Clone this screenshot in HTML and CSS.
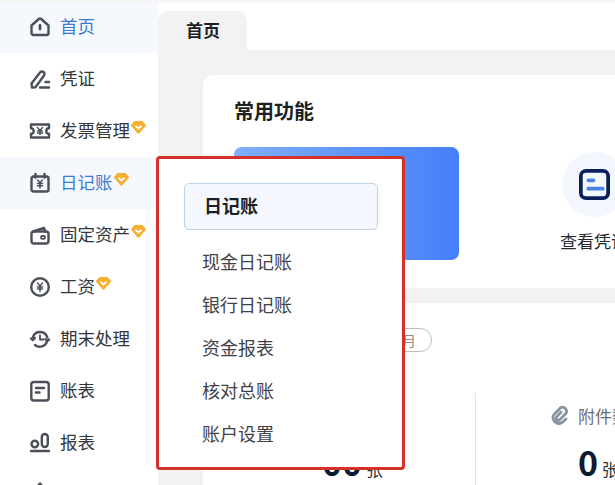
FILE: index.html
```html
<!DOCTYPE html>
<html lang="zh-CN">

<head>
  <meta charset="UTF-8">
  <meta name="viewport" content="width=device-width, initial-scale=1.0">
  <title>首页</title>
  <link rel="stylesheet" href="styles.css">
</head>

<body>
  <div class="page-wrapper">
    <nav class="sidebar">
      <a class="nav-item active">
        <svg class="nav-icon" viewBox="0 0 20 20"><path d="M1.500 8.500 8.800 2a1.800 1.800 0 0 1 2.400 0l7.300 6.500V16a2 2 0 0 1-2 2h-13a2 2 0 0 1-2-2z" /><path class="thick" d="M10 8.500v3.500" /></svg>
        <span>首页</span>
      </a>
      <a class="nav-item">
        <svg class="nav-icon" viewBox="0 0 20 20"><path d="M2 18.500 1.500 14.500 10 3.500a2.500 2.500 0 0 1 4 3L5.500 18.300z" /><path d="M15.500 13h3.500M10 18.500h9" /></svg>
        <span>凭证</span>
      </a>
      <a class="nav-item">
        <svg class="nav-icon" viewBox="0 0 20 20"><path d="M1 3.500h18v3.800a2.700 2.700 0 0 0 0 5.400v3.800H1v-3.800a2.700 2.700 0 0 0 0-5.400z" /><path class="thin" d="M7.500 6.500 10 9.500 12.500 6.500M10 9.500V13.500M7.500 10h5M7.500 12h5" /></svg>
        <span>发票管理</span>
        <svg class="vip" viewBox="0 0 15 13"><path class="vip-gem" d="M4 1h7l3 3.300-6.500 7.500L1 4.300z" /><path class="vip-tick" d="M4.500 4.800 7.500 7.500 10.500 4.800" /></svg>
      </a>
      <a class="nav-item active">
        <svg class="nav-icon" viewBox="0 0 20 20"><rect x="1.500" y="3.500" width="17" height="15" rx="2" /><path d="M5.500 1v3.500M14.500 1v3.500" /><path class="thin" d="M7.500 7 10 9.800 12.500 7M10 9.800V15M7.500 10.500h5M7.500 12.700h5" /></svg>
        <span>日记账</span>
        <svg class="vip" viewBox="0 0 15 13"><path class="vip-gem" d="M4 1h7l3 3.300-6.500 7.500L1 4.300z" /><path class="vip-tick" d="M4.500 4.800 7.500 7.500 10.500 4.800" /></svg>
      </a>
      <a class="nav-item">
        <svg class="nav-icon" viewBox="0 0 20 20"><path d="M3 6.500 14 3l1.500 3.500" /><rect x="1.500" y="6.500" width="17" height="12" rx="2.500" /><rect class="mid" x="11" y="11" width="4" height="2.800" rx="1.400" /></svg>
        <span>固定资产</span>
        <svg class="vip" viewBox="0 0 15 13"><path class="vip-gem" d="M4 1h7l3 3.300-6.500 7.500L1 4.300z" /><path class="vip-tick" d="M4.500 4.800 7.500 7.500 10.500 4.800" /></svg>
      </a>
      <a class="nav-item">
        <svg class="nav-icon" viewBox="0 0 20 20"><circle cx="10" cy="10" r="8.800" /><path class="thin" d="M7.500 6 10 9 12.500 6M10 9v5.500M7.500 10h5M7.500 12h5" /></svg>
        <span>工资</span>
        <svg class="vip" viewBox="0 0 15 13"><path class="vip-gem" d="M4 1h7l3 3.300-6.500 7.500L1 4.300z" /><path class="vip-tick" d="M4.500 4.800 7.500 7.500 10.500 4.800" /></svg>
      </a>
      <a class="nav-item">
        <svg class="nav-icon" viewBox="0 0 20 20"><path d="M3 8A7.500 7.500 0 0 1 17.300 8.500" /><path d="M17 12.500A7.500 7.500 0 0 1 5 16" /><path d="M1 9.500l2 1.500 1.800-2M19 10.500l-1.800 1.500-1.700-1.800" /><path class="mid" d="M10 6.500V10.500H13.500" /></svg>
        <span>期末处理</span>
      </a>
      <a class="nav-item">
        <svg class="nav-icon" viewBox="0 0 20 20"><rect x="1.300" y="1" width="17.400" height="18.500" rx="2.500" /><path d="M6 7h8M6 11.500h3.500" /></svg>
        <span>账表</span>
      </a>
      <a class="nav-item">
        <svg class="nav-icon bars" viewBox="0 0 20 20"><circle cx="4.800" cy="11" r="3.300" /><rect x="11.800" y="1" width="6" height="13" rx="3" /><path d="M1 18h18" /></svg>
        <span>报表</span>
      </a>
      <a class="nav-item">
        <svg class="nav-icon" viewBox="0 0 20 20"><path d="M7.500 1.500 10 -1.500 12.500 1.500" /></svg>
      </a>
    </nav>

    <main class="main">
      <div class="tabs">
        <div class="tab">首页</div>
      </div>
      <div class="content">
        <section class="card common">
          <h2>常用功能</h2>
          <div class="shortcuts">
            <div class="banner"></div>
            <div class="shortcut">
              <div class="shortcut-circle">
                <svg viewBox="0 0 30 30" class="shortcut-icon">
                  <rect x="1.800" y="1.800" width="26.400" height="26.400" rx="5" />
                  <path d="M9 11h5M9 19h14" />
                </svg>
              </div>
              <span>查看凭证</span>
            </div>
          </div>
        </section>

        <section class="card summary">
          <div class="period">
            <span class="pill">本月</span>
          </div>
          <div class="stats">
            <div class="stat stat-voucher">
              <div class="stat-label">凭证数</div>
              <div class="stat-value"><b>00</b> 张</div>
            </div>
            <div class="stat stat-attach">
              <div class="stat-label">
                <svg viewBox="0 0 20 20" class="clip"><path d="M11 7 6.500 12a2.200 2.200 0 0 0 3 3L15.800 8.500a4 4 0 0 0-5.600-5.500L4 9.500a5.800 5.800 0 0 0 8 8L16 14" /></svg>
                <span>附件数</span>
              </div>
              <div class="stat-value"><b>0</b> 张</div>
            </div>
          </div>
        </section>
      </div>
    </main>

    <div class="popup">
      <div class="popup-title">日记账</div>
      <ul class="popup-list">
        <li>现金日记账</li>
        <li>银行日记账</li>
        <li>资金报表</li>
        <li>核对总账</li>
        <li>账户设置</li>
      </ul>
    </div>
  </div>
</body>

</html>
```

FILE: styles.css
```css
* {
  margin: 0;
  padding: 0;
  box-sizing: border-box;
  font-family: "Noto Sans CJK SC", "Noto Sans", sans-serif;
}

html,
body {
  height: 100%;
  width: 100%;
  overflow: hidden;
  background: #fff;
}

.page-wrapper {
  position: relative;
  display: flex;
  height: 485px;
  width: 615px;
  overflow: hidden;
  border-top: 3px solid #f6f6f6;
}

/* left menu */
.sidebar {
  width: 158px;
  flex-shrink: 0;
  margin-top: -2px;
  background: #fff;
}

.nav-item {
  display: flex;
  height: 52px;
  padding-left: 30px;
  align-items: center;
  font-size: 17.5px;
  color: #33363b;
}

.nav-item span {
  margin-bottom: 3px;
}

.nav-item.active {
  background: #f5f9fe;
  color: #3d7bd2;
}

.nav-icon {
  width: 20px;
  height: 20px;
  margin-right: 10px;
  flex-shrink: 0;
  overflow: visible;
  fill: none;
  stroke: #4b4f57;
  stroke-width: 2.400;
  stroke-linecap: round;
  stroke-linejoin: round;
}

.nav-icon .thin {
  stroke-width: 1.400;
}

.nav-icon .mid {
  stroke-width: 1.800;
}

.nav-icon .thick {
  stroke-width: 2.800;
}

.vip {
  width: 15px;
  height: 13px;
  margin-left: 1px;
  margin-bottom: 8px;
  flex-shrink: 0;
}

.vip-gem {
  fill: #f8b030;
  stroke: #f8b030;
  stroke-width: 2;
  stroke-linejoin: round;
}

.vip-tick {
  fill: none;
  stroke: #fff;
  stroke-width: 1.800;
}

/* main area */
.main {
  flex: 1;
  min-width: 0;
}

.tabs {
  height: 47px;
  padding-top: 8px;
}

.tab {
  display: flex;
  width: 89px;
  height: 39px;
  padding: 0 0 2px 28px;
  align-items: center;
  font-size: 17px;
  font-weight: 700;
  color: #1c1f24;
  background: #f2f2f2;
  border-radius: 11px 11px 0 0;
}

.content {
  height: 435px;
  padding: 25px 0 0 45px;
  background: #f2f2f2;
}

.card {
  width: 412px;
  background: #fff;
}

.common {
  height: 213px;
  padding: 24px 0 0 31px;
  border-radius: 10px 0 0 0;
}

.common h2 {
  font-size: 20px;
  font-weight: 700;
  line-height: 24px;
  color: #1c1f24;
}

.shortcuts {
  display: flex;
  margin-top: 24px;
}

.banner {
  width: 225px;
  height: 113px;
  flex-shrink: 0;
  background: linear-gradient(90deg, #7fb0f8, #457ffb);
  border-radius: 8px;
}

.shortcut {
  display: flex;
  flex-direction: column;
  align-items: center;
  flex-shrink: 0;
  margin-left: 101px;
  font-size: 17px;
  line-height: 24px;
  color: #26292e;
  white-space: nowrap;
}

.shortcut-circle {
  display: flex;
  width: 65px;
  height: 65px;
  margin-top: 5px;
  margin-bottom: 12px;
  align-items: center;
  justify-content: center;
  background: #f3f7fd;
  border-radius: 50%;
}

.shortcut-icon {
  width: 31px;
  height: 31px;
  fill: none;
  stroke: #0b1f5c;
  stroke-width: 3.600;
}

.shortcut-icon path {
  stroke: #4a85e6;
  stroke-linecap: round;
}

.summary {
  height: 182px;
  margin-top: 15px;
  padding-top: 25px;
}

.period {
  display: flex;
  height: 24px;
  width: 229px;
  justify-content: flex-end;
}

.pill {
  display: flex;
  width: 60px;
  height: 24px;
  align-items: center;
  justify-content: center;
  font-size: 14px;
  color: #8b8b8b;
  border: 1px solid #bdbdbd;
  border-radius: 12px;
}

.stats {
  display: grid;
  grid-template-columns: 272px 1fr;
  margin-top: 41px;
}

.stat-voucher {
  padding: 10px 0 0 119px;
}

.stat-attach {
  padding: 10px 0 0 74px;
  border-left: 1px solid #e6e6e6;
}

.stat-label {
  display: flex;
  height: 24px;
  align-items: center;
  font-size: 17px;
  color: #6c6f75;
  white-space: nowrap;
}

.clip {
  width: 20px;
  height: 20px;
  margin-right: 8px;
  flex-shrink: 0;
  fill: none;
  stroke: #8a92a3;
  stroke-width: 2.800;
  stroke-linecap: round;
}

.stat-value {
  margin-top: 12px;
  font-size: 17px;
  line-height: 46px;
  color: #33363b;
  white-space: nowrap;
}

.stat-attach .stat-value {
  margin-left: 28px;
}

.stat-value b {
  font-size: 34px;
  font-weight: 700;
  color: #0d1a33;
}

/* popup menu over the page */
.popup {
  position: absolute;
  left: 156px;
  top: 153px;
  width: 249px;
  height: 314px;
  padding: 24px 24px 0 25px;
  background: #fff;
  border: 3px solid #d2322a;
  border-radius: 4px;
}

.popup-title {
  display: flex;
  width: 194px;
  height: 47px;
  padding: 0 0 3px 19px;
  align-items: center;
  font-size: 18px;
  font-weight: 700;
  color: #1c1f24;
  background: #f4f8fe;
  border: 1px solid #bcd3ea;
  border-radius: 5px;
}

.popup-list {
  margin-top: 10px;
  list-style: none;
}

.popup-list li {
  height: 43px;
  padding-left: 18px;
  font-size: 18px;
  line-height: 43px;
  color: #3f4247;
}
```
